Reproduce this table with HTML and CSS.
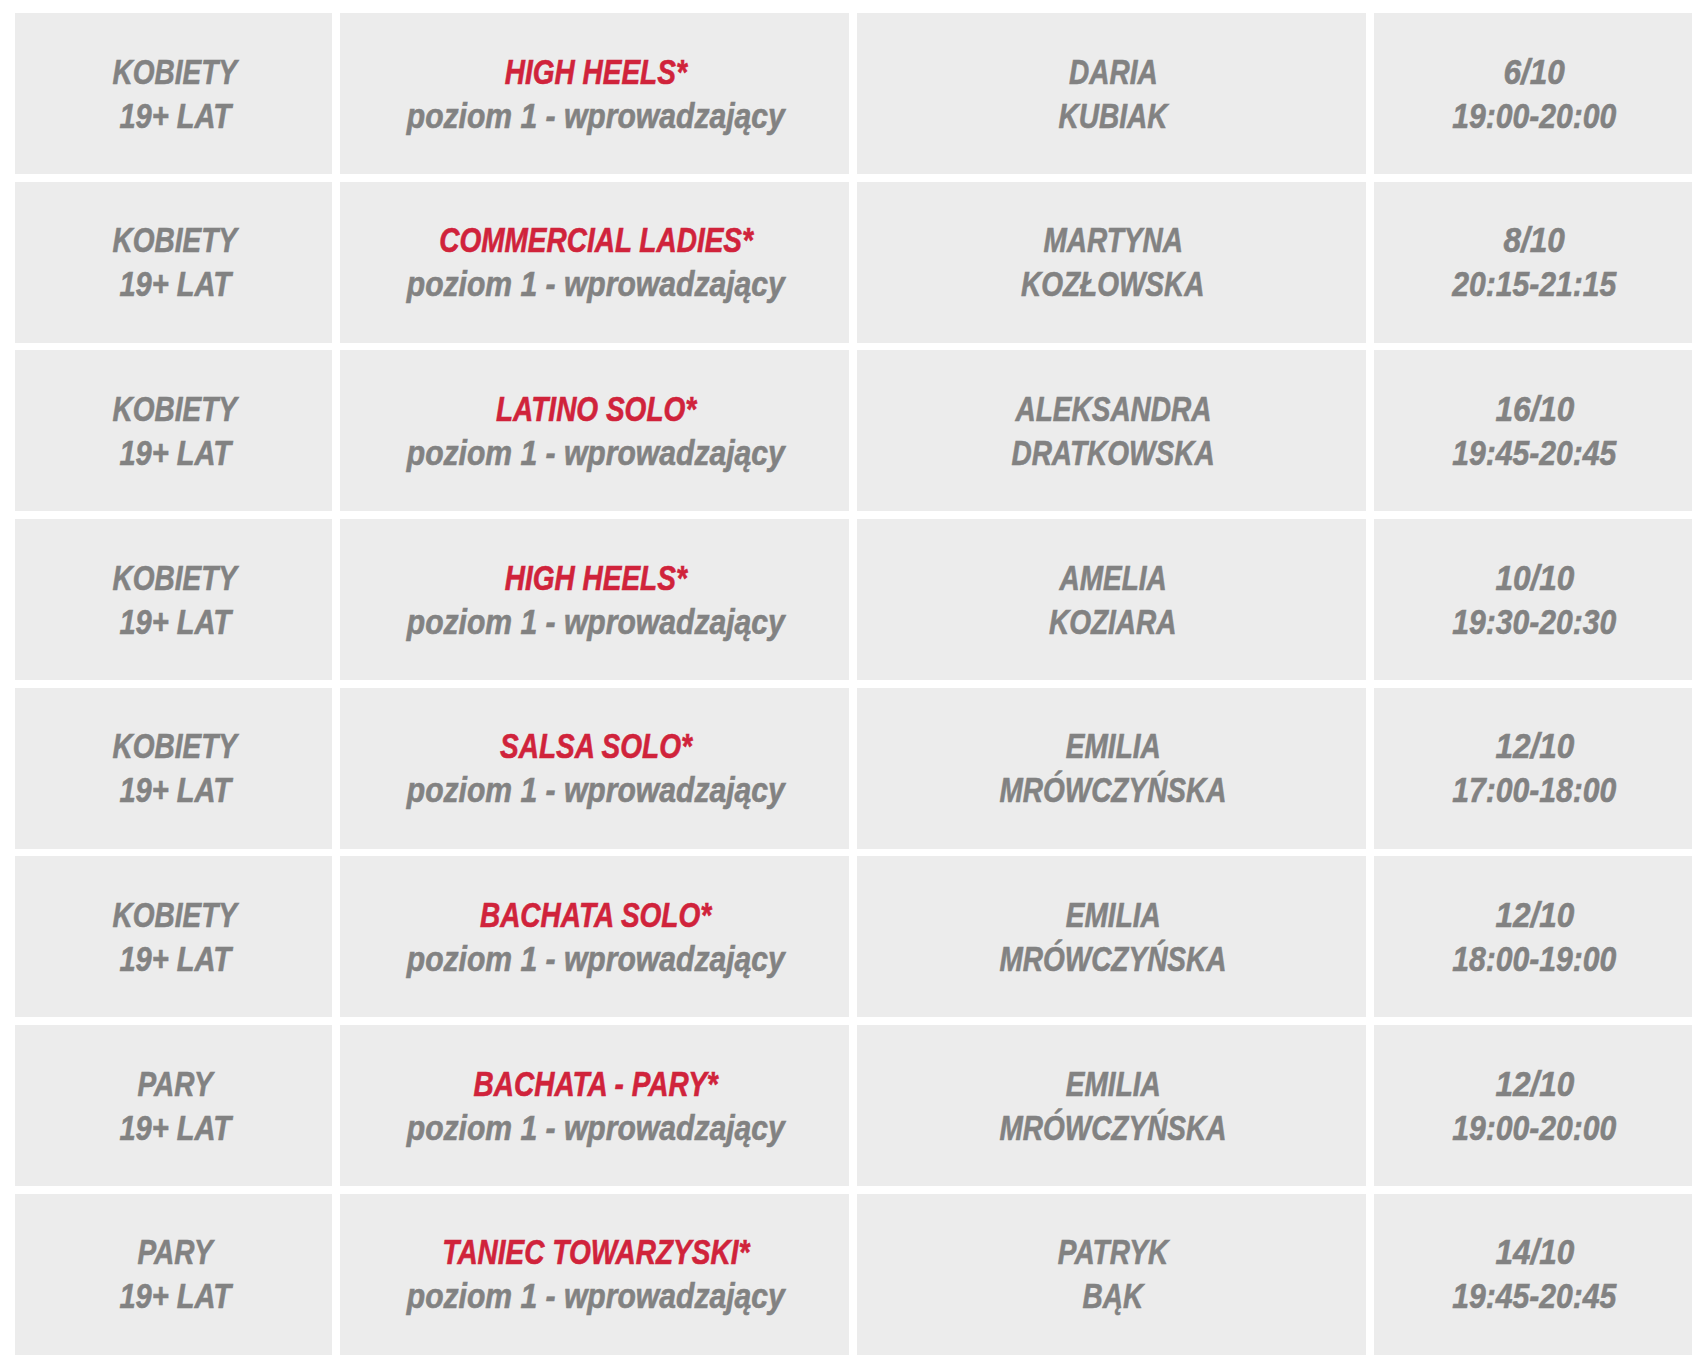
FILE: index.html
```html
<!DOCTYPE html>
<html lang="pl">
<head>
<meta charset="utf-8">
<title>Grafik zajęć</title>
<link rel="stylesheet" href="styles.css">
</head>
<body>
<div class="schedule">
  <div class="cell"><span class="up">KOBIETY</span><span class="mix">19+ LAT</span></div>
  <div class="cell"><span class="up red">HIGH HEELS*</span><span class="low">poziom 1 - wprowadzający</span></div>
  <div class="cell"><span class="up">DARIA</span><span class="up">KUBIAK</span></div>
  <div class="cell"><span class="date">6/10</span><span class="num">19:00-20:00</span></div>

  <div class="cell"><span class="up">KOBIETY</span><span class="mix">19+ LAT</span></div>
  <div class="cell"><span class="up red">COMMERCIAL LADIES*</span><span class="low">poziom 1 - wprowadzający</span></div>
  <div class="cell"><span class="up">MARTYNA</span><span class="up">KOZŁOWSKA</span></div>
  <div class="cell"><span class="date">8/10</span><span class="num">20:15-21:15</span></div>

  <div class="cell"><span class="up">KOBIETY</span><span class="mix">19+ LAT</span></div>
  <div class="cell"><span class="up red">LATINO SOLO*</span><span class="low">poziom 1 - wprowadzający</span></div>
  <div class="cell"><span class="up">ALEKSANDRA</span><span class="up">DRATKOWSKA</span></div>
  <div class="cell"><span class="date">16/10</span><span class="num">19:45-20:45</span></div>

  <div class="cell"><span class="up">KOBIETY</span><span class="mix">19+ LAT</span></div>
  <div class="cell"><span class="up red">HIGH HEELS*</span><span class="low">poziom 1 - wprowadzający</span></div>
  <div class="cell"><span class="up">AMELIA</span><span class="up">KOZIARA</span></div>
  <div class="cell"><span class="date">10/10</span><span class="num">19:30-20:30</span></div>

  <div class="cell"><span class="up">KOBIETY</span><span class="mix">19+ LAT</span></div>
  <div class="cell"><span class="up red">SALSA SOLO*</span><span class="low">poziom 1 - wprowadzający</span></div>
  <div class="cell"><span class="up">EMILIA</span><span class="up">MRÓWCZYŃSKA</span></div>
  <div class="cell"><span class="date">12/10</span><span class="num">17:00-18:00</span></div>

  <div class="cell"><span class="up">KOBIETY</span><span class="mix">19+ LAT</span></div>
  <div class="cell"><span class="up red">BACHATA SOLO*</span><span class="low">poziom 1 - wprowadzający</span></div>
  <div class="cell"><span class="up">EMILIA</span><span class="up">MRÓWCZYŃSKA</span></div>
  <div class="cell"><span class="date">12/10</span><span class="num">18:00-19:00</span></div>

  <div class="cell"><span class="up">PARY</span><span class="mix">19+ LAT</span></div>
  <div class="cell"><span class="up red">BACHATA - PARY*</span><span class="low">poziom 1 - wprowadzający</span></div>
  <div class="cell"><span class="up">EMILIA</span><span class="up">MRÓWCZYŃSKA</span></div>
  <div class="cell"><span class="date">12/10</span><span class="num">19:00-20:00</span></div>

  <div class="cell"><span class="up">PARY</span><span class="mix">19+ LAT</span></div>
  <div class="cell"><span class="up red">TANIEC TOWARZYSKI*</span><span class="low">poziom 1 - wprowadzający</span></div>
  <div class="cell"><span class="up">PATRYK</span><span class="up">BĄK</span></div>
  <div class="cell"><span class="date">14/10</span><span class="num">19:45-20:45</span></div>
</div>
</body>
</html>
```

FILE: styles.css
```css
html, body {
  margin: 0;
  padding: 0;
  background: #ffffff;
}

.schedule {
  display: grid;
  grid-template-columns: 317px 509px 509px 318px;
  grid-auto-rows: 161px;
  column-gap: 8px;
  row-gap: 7.7px;
  padding: 13px 0 0 15px;
}

.cell {
  background: #ececec;
  display: flex;
  flex-direction: column;
  align-items: center;
  justify-content: center;
  padding-left: 3px;
  font-family: "Liberation Sans", Arial, sans-serif;
  font-weight: bold;
  font-style: italic;
  font-size: 35px;
  line-height: 44px;
  color: #828282;
  white-space: nowrap;
  -webkit-text-stroke: 0.6px currentColor;
}

.cell span {
  display: block;
  transform-origin: center;
}

.up {
  transform: scaleX(0.8);
}

.mix {
  transform: scaleX(0.83);
}

.low {
  transform: scaleX(0.86);
}

.num {
  transform: scaleX(0.86);
}

.date {
  transform: scaleX(0.9);
}

.red {
  color: #d0233b;
}
```
